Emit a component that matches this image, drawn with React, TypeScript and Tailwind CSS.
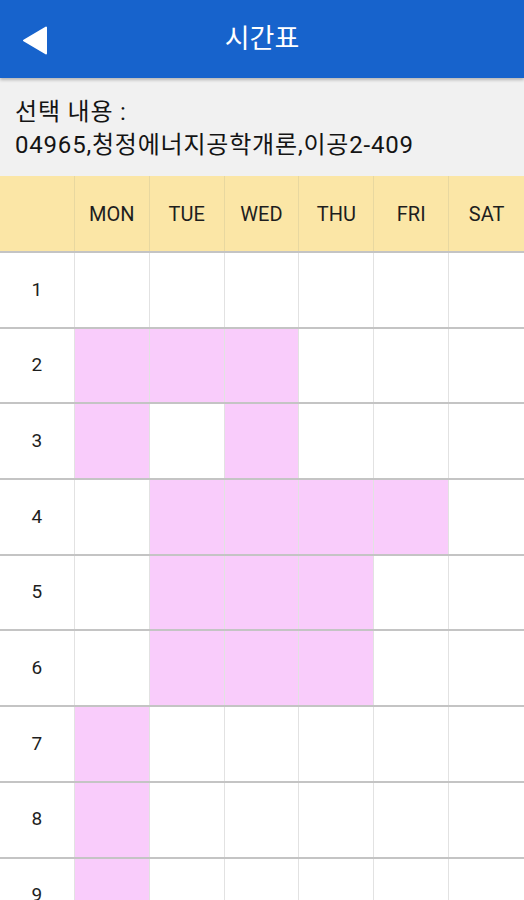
import React from 'react'

const days = ['MON', 'TUE', 'WED', 'THU', 'FRI', 'SAT']

// which cells are filled, per period (index into days)
const filled: Record<number, number[]> = {
  2: [0, 1, 2],
  3: [0, 2],
  4: [1, 2, 3, 4],
  5: [1, 2, 3],
  6: [1, 2, 3],
  7: [0],
  8: [0],
  9: [0],
}

const periods = [1, 2, 3, 4, 5, 6, 7, 8, 9]

const App = () => {
  return (
    <div
      className="w-[524px] h-[900px] overflow-hidden bg-white"
      style={{ fontFamily: 'Roboto, "Noto Sans CJK KR", sans-serif' }}
    >
      <header className="relative h-[78px] bg-[#1763cc] flex items-center justify-center shadow-[0_2px_3px_rgba(0,0,0,0.25)] z-10">
        <div className="absolute left-[22px] top-[26px]">
          <svg width="25" height="29" viewBox="0 0 25 29">
            <path d="M24 1.5 L24 27.5 L2 14.5 Z" fill="#fff" stroke="#fff" strokeWidth="2" strokeLinejoin="round" />
          </svg>
        </div>
        <h1 className="text-white text-[27px] leading-none">시간표</h1>
      </header>

      <section className="h-[98px] bg-[#f1f1f1] px-[15px] pt-[18px] text-[24px] leading-[33px] tracking-[0.8px] text-[#141414]">
        <p>선택 내용 :</p>
        <p>04965,청정에너지공학개론,이공2-409</p>
      </section>

      <div className="grid grid-cols-7 h-[75px] bg-[#fbe6a6]">
        <div className="border-r border-[#e8d8a0]" />
        {days.map((d) => (
          <div
            key={d}
            className="flex items-center justify-center border-r border-[#e8d8a0] last:border-r-0 text-[20px] text-[#1e1e1e]"
          >
            {d}
          </div>
        ))}
      </div>

      {periods.map((p) => (
        <div key={p} className="grid grid-cols-7 h-[75.7px] border-t-2 border-[#c4c4c4]">
          <div className="flex items-center justify-center border-r border-[#e2e2e2] text-[19px] text-[#1e1e1e]">
            {p}
          </div>
          {days.map((d, i) => (
            <div
              key={d}
              className={`border-r border-[#e2e2e2] last:border-r-0 ${
                filled[p]?.includes(i) ? 'bg-[#f9ccfb]' : 'bg-white'
              }`}
            />
          ))}
        </div>
      ))}
    </div>
  )
}

export default App
